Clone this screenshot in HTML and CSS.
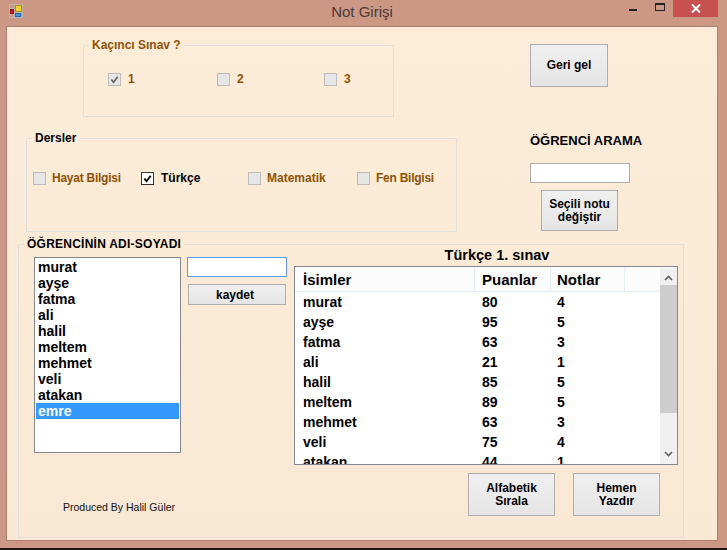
FILE: index.html
```html
<!DOCTYPE html>
<html lang="tr">
<head>
<meta charset="utf-8">
<title>Not Girişi</title>
<link rel="stylesheet" href="styles.css">
</head>
<body>
<div class="window">
  <header class="titlebar">
    <svg class="app-icon" width="14" height="14" viewBox="0 0 14 14">
      <path d="M0.5 0.5H13.5V13.5H0.5ZM0.5 4.5H5.5M5.5 0.5V13.5M0.5 10.5H5.5M5.5 8.5H13.5" fill="none" stroke="#b9b9b4"/>
      <rect x="6.5" y="1.5" width="6" height="6" fill="#f7cf2e" stroke="#b88a14"/>
      <rect x="1.5" y="5.5" width="3" height="4" fill="#d5161a" stroke="#8d1012"/>
      <rect x="6.5" y="9.5" width="5" height="3" fill="#4d8fe0" stroke="#2f66b0"/>
    </svg>
    <h1 class="title">Not Girişi</h1>
    <div class="caption">
      <span class="cap-min"></span>
      <span class="cap-max"></span>
      <span class="cap-close"><svg width="10" height="9" viewBox="0 0 10 9"><path d="M1 0.5L9 8.5M9 0.5L1 8.5" stroke="#fff" stroke-width="2"/></svg></span>
    </div>
  </header>
  <main class="client">
    <section class="top">
      <fieldset class="group exam">
        <legend class="legend brown">Kaçıncı Sınav ?</legend>
        <div class="checks exam-checks">
          <label class="check brown"><span class="box off"><svg viewBox="0 0 12 12"><path d="M2.5 6 L5 9 L9.5 3" fill="none" stroke="#6a6a6a" stroke-width="2"/></svg></span>1</label>
          <label class="check brown"><span class="box off"></span>2</label>
          <label class="check brown"><span class="box off"></span>3</label>
        </div>
      </fieldset>
      <button class="btn back">Geri gel</button>
    </section>

    <section class="middle">
      <fieldset class="group lessons">
        <legend class="legend">Dersler</legend>
        <div class="checks lesson-checks">
          <label class="check brown"><span class="box off"></span><span class="tight">Hayat Bilgisi</span></label>
          <label class="check"><span class="box on"><svg viewBox="0 0 12 12"><path d="M2.5 6 L5 9 L9.5 3" fill="none" stroke="#000" stroke-width="2"/></svg></span>Türkçe</label>
          <label class="check brown"><span class="box off"></span>Matematik</label>
          <label class="check brown"><span class="box off"></span><span class="tight">Fen Bilgisi</span></label>
        </div>
      </fieldset>
      <div class="search">
        <div class="search-title">ÖĞRENCİ ARAMA</div>
        <div class="input search-input"></div>
        <button class="btn change">Seçili notu<br>değiştir</button>
      </div>
    </section>

    <fieldset class="group student">
      <legend class="legend student-legend">ÖĞRENCİNİN ADI-SOYADI</legend>
      <div class="student-body">
        <div class="left-col">
          <ul class="listbox">
            <li>murat</li><li>ayşe</li><li>fatma</li><li>ali</li><li>halil</li><li>meltem</li><li>mehmet</li><li>veli</li><li>atakan</li><li class="selected">emre</li>
          </ul>
          <div class="credit">Produced By Halil Güler</div>
        </div>
        <div class="edit-col">
          <div class="input name-input"></div>
          <button class="btn save">kaydet</button>
        </div>
        <div class="grid-col">
          <div class="grid-title">Türkçe 1. sınav</div>
          <div class="datagrid">
            <div class="grid-main">
              <div class="row head"><span>İsimler</span><span>Puanlar</span><span>Notlar</span><span></span></div>
              <div class="row"><span>murat</span><span>80</span><span>4</span></div>
              <div class="row"><span>ayşe</span><span>95</span><span>5</span></div>
              <div class="row"><span>fatma</span><span>63</span><span>3</span></div>
              <div class="row"><span>ali</span><span>21</span><span>1</span></div>
              <div class="row"><span>halil</span><span>85</span><span>5</span></div>
              <div class="row"><span>meltem</span><span>89</span><span>5</span></div>
              <div class="row"><span>mehmet</span><span>63</span><span>3</span></div>
              <div class="row"><span>veli</span><span>75</span><span>4</span></div>
              <div class="row"><span>atakan</span><span>44</span><span>1</span></div>
            </div>
            <div class="scrollbar">
              <svg class="arrow" viewBox="0 0 9 6" width="9" height="6"><path d="M1 5 L4.5 1.5 L8 5" fill="none" stroke="#606060" stroke-width="1.6"/></svg>
              <div class="thumb"></div>
              <svg class="arrow down" viewBox="0 0 9 6" width="9" height="6"><path d="M1 1 L4.5 4.5 L8 1" fill="none" stroke="#606060" stroke-width="1.6"/></svg>
            </div>
          </div>
          <div class="actions">
            <button class="btn action">Alfabetik<br>Sırala</button>
            <button class="btn action">Hemen<br>Yazdır</button>
          </div>
        </div>
      </div>
    </fieldset>
  </main>
</div>
</body>
</html>
```
FILE: styles.css
```css
* { box-sizing: border-box; }
html, body { margin: 0; height: 100%; }
body {
  background: #1d1512;
  font-family: "Liberation Sans", Arial, sans-serif;
  font-size: 12px;
  font-weight: bold;
  color: #000;
  overflow: hidden;
}
.window {
  width: 727px;
  height: 548px;
  background: #cc9785;
  padding: 0 9px 7px 6px;
  display: flex;
  flex-direction: column;
}
.titlebar {
  height: 26px;
  flex: none;
  display: flex;
  align-items: flex-start;
  position: relative;
}
.app-icon { margin: 4px 0 0 3px; }
.title {
  position: absolute;
  left: 0;
  right: 0;
  top: 3px;
  margin: 0;
  text-align: center;
  font-size: 15px;
  font-weight: normal;
  line-height: 18px;
  color: #4f3a32;
}
.caption {
  margin-left: auto;
  display: flex;
  align-items: flex-start;
}
.cap-min { width: 8px; height: 2px; background: #222; margin: 9px 18px 0 0; }
.cap-max { width: 10px; height: 8px; border: 1px solid #222; border-top-width: 2px; margin: 3px 8px 0 0; }
.cap-close {
  width: 45px;
  height: 17px;
  background: #c75050;
  display: flex;
  align-items: center;
  justify-content: center;
}
.client {
  flex: 1;
  border: 1px solid #ad7f70;
  background: linear-gradient(#fcecd8, #f8e8d4);
  min-height: 0;
}
.group {
  margin: 0;
  padding: 0;
  border: 1px solid #e0e0dc;
  min-width: 0;
}
.legend {
  padding: 0 3px;
  line-height: 14px;
}
.student-legend { letter-spacing: 0.24px; }
.brown { color: #8f5207; }
.tight { letter-spacing: -0.25px; }
.top {
  display: flex;
  align-items: flex-start;
  padding: 11px 0 0 76px;
  height: 104px;
}
.exam {
  width: 311px;
  height: 79px;
  padding-top: 20px;
}
.exam .legend { margin-left: 5px; }
.checks { display: flex; align-items: center; }
.exam-checks { padding-left: 24px; }
.exam-checks .check:nth-child(1) { width: 109px; }
.exam-checks .check:nth-child(2) { width: 107px; }
.check {
  display: flex;
  align-items: center;
  gap: 7px;
  line-height: 14px;
  white-space: nowrap;
}
.lesson-checks .brown { gap: 6px; }
.box {
  width: 13px;
  height: 13px;
  flex: none;
  display: block;
}
.box svg { display: block; width: 11px; height: 11px; }
.box.off { background: #e6e6e6; border: 1px solid #bcbcbc; }
.box.on { background: #fff; border: 1px solid #333; }
.btn {
  font: inherit;
  color: #000;
  border: 1px solid #adadad;
  background: linear-gradient(#f0f0f0, #e5e5e5);
  padding: 0;
  line-height: 13px;
  display: block;
}
.back {
  width: 78px;
  height: 43px;
  margin: 6px 0 0 136px;
}
.middle {
  display: flex;
  align-items: flex-start;
  height: 106px;
  padding-left: 19px;
}
.lessons {
  width: 431px;
  height: 101px;
  padding-top: 26px;
}
.lessons .legend { margin-left: 5px; }
.lesson-checks { padding-left: 6px; }
.lesson-checks .check:nth-child(1) { width: 108px; }
.lesson-checks .check:nth-child(2) { width: 107px; }
.lesson-checks .check:nth-child(3) { width: 109px; }
.search {
  margin-left: 73px;
  width: 100px;
  display: flex;
  flex-direction: column;
}
.search-title { white-space: nowrap; font-size: 13px; line-height: 14px; margin-top: 3px; }
.input { background: #fff; border: 1px solid #ababab; }
.search-input { width: 100px; height: 20px; margin-top: 15px; }
.change { width: 77px; height: 41px; margin: 7px 0 0 11px; }
.student {
  width: 666px;
  height: 301px;
  margin-left: 11px;
}
.student .legend { margin-left: 5px; }
.student-body {
  display: flex;
  align-items: flex-start;
  padding: 6px 0 0 15px;
}
.left-col { width: 147px; flex: none; }
.listbox {
  margin: 0;
  padding: 1px 0 0 1px;
  list-style: none;
  width: 147px;
  height: 196px;
  background: #fff;
  border: 1px solid #828790;
  font-size: 14px;
}
.listbox li { height: 16px; line-height: 16px; padding-left: 2px; margin-right: 1px; }
.listbox .selected { background: #3399ff; color: #fff; }
.credit {
  font-weight: normal;
  font-size: 10.5px;
  margin: 47px 0 0 29px;
  white-space: nowrap;
  line-height: 14px;
  color: #111;
}
.edit-col { width: 100px; margin-left: 6px; flex: none; }
.name-input { width: 100px; height: 20px; border-color: #569de5; }
.save { width: 98px; height: 21px; margin: 7px 0 0 1px; padding: 1px 4px 0 0; }
.grid-col {
  width: 384px;
  margin: -9px 0 0 7px;
  flex: none;
}
.grid-title {
  text-align: center;
  font-size: 14.5px;
  line-height: 15px;
  padding-left: 22px;
  height: 15px;
}
.datagrid {
  width: 384px;
  height: 199px;
  background: #fff;
  border: 1px solid #828790;
  display: flex;
  overflow: hidden;
  margin-top: 3px;
}
.grid-main { flex: 1; overflow: hidden; font-size: 14px; }
.row {
  display: grid;
  grid-template-columns: 180px 76px 74px 1fr;
  height: 20px;
  align-items: center;
  line-height: 20px;
}
.row span { padding-left: 8px; }
.row span:nth-child(2) { padding-left: 7px; }
.row span:nth-child(3) { padding-left: 6px; }
.head {
  height: 25px;
  font-size: 15px;
  background: #fcfcfc;
  border-bottom: 1px solid #e3eef8;
}
.head span { height: 24px; line-height: 26px; border-right: 1px solid #e3eef8; }
.head span:last-child { border-right: 0; }
.scrollbar {
  width: 17px;
  flex: none;
  background: #f0f0f0;
  margin-top: 1px;
  display: flex;
  flex-direction: column;
  align-items: center;
}
.arrow { display: block; margin-top: 7px; flex: none; }
.thumb { width: 100%; height: 128px; background: #cdcdcd; margin-top: 4px; }
.arrow.down { margin-top: auto; margin-bottom: 7px; }
.actions {
  display: flex;
  margin: 8px 0 0 174px;
  gap: 18px;
}
.action { width: 87px; height: 43px; }
```
